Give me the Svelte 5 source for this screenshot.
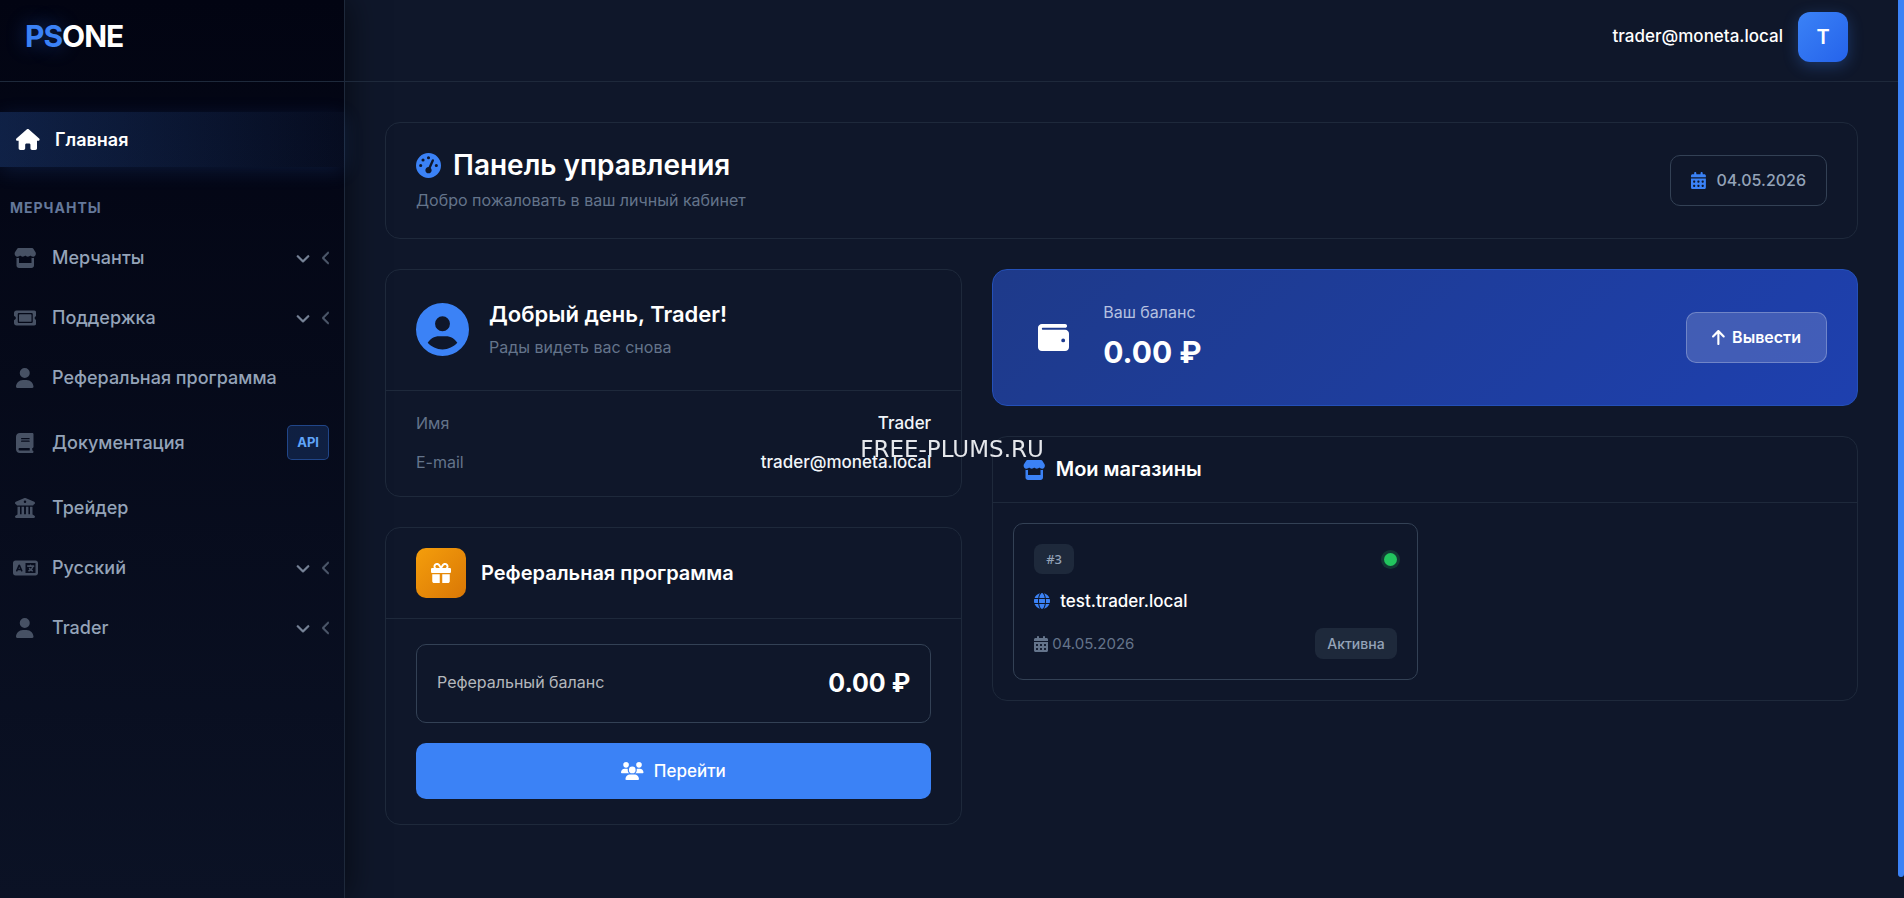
<script lang="ts">
  type IconDef = { w: number; d: string };

  type NavItem = {
    label: string;
    icon: string;
    submenu?: boolean;
    badge?: string;
  };

  const icons: Record<string, IconDef> = {
    home: {
      w: 576,
      d: 'M575.8 255.5c0 18-15 32.1-32 32.1h-32l.7 160.2c0 2.7-.2 5.4-.5 8.1V472c0 22.1-17.9 40-40 40H456c-1.1 0-2.2 0-3.3-.1c-1.4 .1-2.8 .1-4.2 .1H416 392c-22.1 0-40-17.9-40-40V448 384c0-17.7-14.3-32-32-32H256c-17.7 0-32 14.3-32 32v64 24c0 22.1-17.9 40-40 40H160 128.1c-1.5 0-3-.1-4.5-.2c-1.2 .1-2.4 .2-3.6 .2H104c-22.1 0-40-17.9-40-40V360c0-.9 0-1.9 .1-2.8V287.6H32c-18 0-32-14-32-32.1c0-9 3-17 10-24L266.4 8c7-7 15-8 22-8s15 2 21 7L564.8 231.5c8 7 12 15 11 24z',
    },
    store: {
      w: 576,
      d: 'M547.6 103.8L490.3 13.1C485.2 5 476.1 0 466.4 0H109.6C99.9 0 90.8 5 85.7 13.1L28.3 103.8c-29.6 46.8-3.4 111.9 51.9 119.4c4 .5 8.1 .8 12.1 .8c26.1 0 49.3-11.4 65.2-29c15.9 17.6 39.1 29 65.2 29c26.1 0 49.3-11.4 65.2-29c15.9 17.6 39.1 29 65.2 29c26.2 0 49.3-11.4 65.2-29c16 17.6 39.1 29 65.2 29c4.1 0 8.1-.3 12.1-.8c55.5-7.4 81.8-72.5 52.1-119.4zM499.7 254.9l-.1 0c-5.3 .7-10.7 1.1-16.2 1.1c-12.4 0-24.3-1.9-35.4-5.3V384H128V250.6c-11.2 3.5-23.2 5.4-35.6 5.4c-5.5 0-11-.4-16.3-1.1l-.1 0c-4.1-.6-8.1-1.3-12-2.3V384v64c0 35.3 28.7 64 64 64H448c35.3 0 64-28.7 64-64V384 252.6c-4 1-8 1.8-12.3 2.3z',
    },
    ticket: {
      w: 576,
      d: 'M64 64C28.7 64 0 92.7 0 128v64c0 8.8 7.4 15.7 15.7 18.6C34.5 217.1 48 235 48 256s-13.5 38.9-32.3 45.4C7.4 304.3 0 311.2 0 320v64c0 35.3 28.7 64 64 64H512c35.3 0 64-28.7 64-64V320c0-8.8-7.4-15.7-15.7-18.6C541.5 294.9 528 277 528 256s13.5-38.9 32.3-45.4c8.3-2.9 15.7-9.8 15.7-18.6V128c0-35.3-28.7-64-64-64H64zm64 112l0 160c0 8.8 7.2 16 16 16H432c8.8 0 16-7.2 16-16V176c0-8.8-7.2-16-16-16H144c-8.8 0-16 7.2-16 16zM96 160c0-17.7 14.3-32 32-32H448c17.7 0 32 14.3 32 32V352c0 17.7-14.3 32-32 32H128c-17.7 0-32-14.3-32-32V160z',
    },
    user: {
      w: 448,
      d: 'M224 256A128 128 0 1 0 224 0a128 128 0 1 0 0 256zm-45.7 48C79.8 304 0 383.8 0 482.3C0 498.7 13.3 512 29.7 512H418.3c16.4 0 29.7-13.3 29.7-29.7C448 383.8 368.2 304 269.7 304H178.3z',
    },
    book: {
      w: 448,
      d: 'M96 0C43 0 0 43 0 96V416c0 53 43 96 96 96H384h32c17.7 0 32-14.3 32-32s-14.3-32-32-32V384c17.7 0 32-14.3 32-32V32c0-17.7-14.3-32-32-32H384 96zm0 384H352v64H96c-17.7 0-32-14.3-32-32s14.3-32 32-32zm32-240c0-8.8 7.2-16 16-16H336c8.8 0 16 7.2 16 16s-7.2 16-16 16H144c-8.8 0-16-7.2-16-16zm16 48H336c8.8 0 16 7.2 16 16s-7.2 16-16 16H144c-8.8 0-16-7.2-16-16s7.2-16 16-16z',
    },
    bank: {
      w: 512,
      d: 'M243.4 2.6l-224 96c-14 6-21.8 21-18.7 35.8S16.8 160 32 160v8c0 13.3 10.7 24 24 24H456c13.3 0 24-10.7 24-24v-8c15.2 0 28.3-10.7 31.3-25.6s-4.8-29.9-18.7-35.8l-224-96c-8-3.4-17.2-3.4-25.2 0zM128 224H64V420.3c-.6 .3-1.2 .7-1.8 1.1l-48 32c-11.7 7.8-17 22.4-12.9 35.9S17.9 512 32 512H480c14.1 0 26.5-9.2 30.6-22.7s-1.1-28.1-12.9-35.9l-48-32c-.6-.4-1.2-.7-1.8-1.1V224H384V416H344V224H280V416H232V224H168V416H128V224zM256 64a32 32 0 1 1 0 64 32 32 0 1 1 0-64z',
    },
    language: {
      w: 640,
      d: 'M0 128C0 92.7 28.7 64 64 64H256h48 16H576c35.3 0 64 28.7 64 64V384c0 35.3-28.7 64-64 64H320 304 256 64c-35.3 0-64-28.7-64-64V128zm320 0V384H576V128H320zM178.3 175.9c-3.2-7.2-10.4-11.9-18.3-11.9s-15.1 4.7-18.3 11.9l-64 144c-4.5 10.1 .1 21.9 10.2 26.4s21.9-.1 26.4-10.2l8.9-20.1h73.6l8.9 20.1c4.5 10.1 16.3 14.6 26.4 10.2s14.6-16.3 10.2-26.4l-64-144zM160 233.2L179 276H141l19-42.8zM448 164c11 0 20 9 20 20v4h44 16c11 0 20 9 20 20s-9 20-20 20h-2l-1.6 4.5c-8.9 24.4-22.4 46.6-39.6 65.4c.9 .6 1.8 1.1 2.7 1.6l18.9 11.3c9.5 5.7 12.5 18 6.9 27.4s-18 12.5-27.4 6.9l-18.9-11.3c-4.5-2.7-8.8-5.5-13.1-8.5c-10.6 7.5-21.9 14-34 19.4l-3.6 1.6c-10.1 4.5-21.9-.1-26.4-10.2s.1-21.9 10.2-26.4l3.6-1.6c6.4-2.9 12.6-6.1 18.5-9.8l-12.2-12.2c-7.8-7.8-7.8-20.5 0-28.3s20.5-7.8 28.3 0l14.6 14.6 .5 .5c12.4-13.1 22.5-28.3 29.8-45H448 376c-11 0-20-9-20-20s9-20 20-20h52v-4c0-11 9-20 20-20z',
    },
    down: {
      w: 512,
      d: 'M233.4 406.6c12.5 12.5 32.8 12.5 45.3 0l192-192c12.5-12.5 12.5-32.8 0-45.3s-32.8-12.5-45.3 0L256 338.7 86.6 169.4c-12.5-12.5-32.8-12.5-45.3 0s-12.5 32.8 0 45.3l192 192z',
    },
    left: {
      w: 256,
      d: 'M9.4 233.4c-12.5 12.5-12.5 32.8 0 45.3l192 192c12.5 12.5 32.8 12.5 45.3 0s12.5-32.8 0-45.3L77.3 256 246.6 86.6c12.5-12.5 12.5-32.8 0-45.3s-32.8-12.5-45.3 0l-192 192z',
    },
    calendar: {
      w: 448,
      d: 'M128 0c17.7 0 32 14.3 32 32V64H288V32c0-17.7 14.3-32 32-32s32 14.3 32 32V64h48c26.5 0 48 21.5 48 48v48H0V112C0 85.5 21.5 64 48 64H96V32c0-17.7 14.3-32 32-32zM0 192H448V464c0 26.5-21.5 48-48 48H48c-26.5 0-48-21.5-48-48V192zm64 80v32c0 8.8 7.2 16 16 16h32c8.8 0 16-7.2 16-16V272c0-8.8-7.2-16-16-16H80c-8.8 0-16 7.2-16 16zm128 0v32c0 8.8 7.2 16 16 16h32c8.8 0 16-7.2 16-16V272c0-8.8-7.2-16-16-16H208c-8.8 0-16 7.2-16 16zm144-16c-8.8 0-16 7.2-16 16v32c0 8.8 7.2 16 16 16h32c8.8 0 16-7.2 16-16V272c0-8.8-7.2-16-16-16H336zM64 400v32c0 8.8 7.2 16 16 16h32c8.8 0 16-7.2 16-16V400c0-8.8-7.2-16-16-16H80c-8.8 0-16 7.2-16 16zm144-16c-8.8 0-16 7.2-16 16v32c0 8.8 7.2 16 16 16h32c8.8 0 16-7.2 16-16V400c0-8.8-7.2-16-16-16H208zm112 16v32c0 8.8 7.2 16 16 16h32c8.8 0 16-7.2 16-16V400c0-8.8-7.2-16-16-16H336c-8.8 0-16 7.2-16 16z',
    },
    gauge: {
      w: 512,
      d: 'M0 256a256 256 0 1 1 512 0A256 256 0 1 1 0 256zM288 96a32 32 0 1 0 -64 0 32 32 0 1 0 64 0zM256 416c35.3 0 64-28.7 64-64c0-17.4-6.9-33.1-18.1-44.6L366 161.7c5.3-12.1-.2-26.3-12.3-31.6s-26.3 .2-31.6 12.3L257.9 288c-.6 0-1.3 0-1.9 0c-35.3 0-64 28.7-64 64s28.7 64 64 64zM176 144a32 32 0 1 0 -64 0 32 32 0 1 0 64 0zM96 288a32 32 0 1 0 0-64 32 32 0 1 0 0 64zm352-32a32 32 0 1 0 -64 0 32 32 0 1 0 64 0z',
    },
    userCircle: {
      w: 512,
      d: 'M399 384.2C376.9 345.8 335.4 320 288 320H224c-47.4 0-88.9 25.8-111 64.2c35.2 39.2 86.2 63.8 143 63.8s107.8-24.7 143-63.8zM0 256a256 256 0 1 1 512 0A256 256 0 1 1 0 256zm256 16a72 72 0 1 0 0-144 72 72 0 1 0 0 144z',
    },
    gift: {
      w: 512,
      d: 'M190.5 68.8L225.3 128H224 152c-22.1 0-40-17.9-40-40s17.9-40 40-40h2.2c14.9 0 28.8 7.9 36.3 20.8zM64 88c0 14.4 3.5 28 9.6 40H32c-17.7 0-32 14.3-32 32v64c0 17.7 14.3 32 32 32H480c17.7 0 32-14.3 32-32V160c0-17.7-14.3-32-32-32H438.4c6.1-12 9.6-25.6 9.6-40c0-48.6-39.4-88-88-88h-2.2c-31.9 0-61.5 16.9-77.7 44.4L256 85.5l-24.1-41C215.7 16.9 186.1 0 154.2 0H152C103.4 0 64 39.4 64 88zm336 0c0 22.1-17.9 40-40 40H288h-1.3l34.8-59.2C329.1 55.9 342.9 48 357.8 48H360c22.1 0 40 17.9 40 40zM32 288V464c0 26.5 21.5 48 48 48H224V288H32zM288 512H432c26.5 0 48-21.5 48-48V288H288V512z',
    },
    wallet: {
      w: 512,
      d: 'M64 32C28.7 32 0 60.7 0 96V416c0 35.3 28.7 64 64 64H448c35.3 0 64-28.7 64-64V192c0-35.3-28.7-64-64-64H80c-8.8 0-16-7.2-16-16s7.2-16 16-16H448c17.7 0 32-14.3 32-32s-14.3-32-32-32H64zM416 272a32 32 0 1 1 0 64 32 32 0 1 1 0-64z',
    },
    up: {
      w: 384,
      d: 'M214.6 41.4c-12.5-12.5-32.8-12.5-45.3 0l-160 160c-12.5 12.5-12.5 32.8 0 45.3s32.8 12.5 45.3 0L160 141.2V448c0 17.7 14.3 32 32 32s32-14.3 32-32V141.2L329.4 246.6c12.5 12.5 32.8 12.5 45.3 0s12.5-32.8 0-45.3l-160-160z',
    },
    globe: {
      w: 512,
      d: 'M352 256c0 22.2-1.2 43.6-3.3 64H163.3c-2.2-20.4-3.3-41.8-3.3-64s1.2-43.6 3.3-64H348.7c2.2 20.4 3.3 41.8 3.3 64zm28.8-64H503.9c5.3 20.5 8.1 41.9 8.1 64s-2.8 43.5-8.1 64H380.8c2.1-20.6 3.2-42 3.2-64s-1.1-43.4-3.2-64zm112.6-32H376.7c-10-63.9-29.8-117.4-55.3-151.6c78.3 20.7 142 77.5 171.9 151.6zm-149.1 0H167.7c6.1-36.4 15.5-68.6 27-94.7c10.5-23.6 22.2-40.7 33.5-51.5C239.4 3.2 248.7 0 256 0s16.6 3.2 27.8 13.8c11.3 10.8 23 27.9 33.5 51.5c11.6 26 20.9 58.2 27 94.7zm-209 0H18.6C48.6 85.9 112.2 29.1 190.6 8.4C165.1 42.6 145.3 96.1 135.3 160zM8.1 192H131.2c-2.1 20.6-3.2 42-3.2 64s1.1 43.4 3.2 64H8.1C2.8 299.5 0 278.1 0 256s2.8-43.5 8.1-64zM194.7 446.6c-11.6-26-20.9-58.2-27-94.6H344.3c-6.1 36.4-15.5 68.6-27 94.6c-10.5 23.6-22.2 40.7-33.5 51.5C272.6 508.8 263.3 512 256 512s-16.6-3.2-27.8-13.8c-11.3-10.8-23-27.9-33.5-51.5zM135.3 352c10 63.9 29.8 117.4 55.3 151.6C112.2 482.9 48.6 426.1 18.6 352H135.3zm358.1 0c-30 74.1-93.6 130.9-171.9 151.6c25.5-34.2 45.2-87.7 55.3-151.6H493.4z',
    },
    users: {
      w: 640,
      d: 'M144 0a80 80 0 1 1 0 160A80 80 0 1 1 144 0zM512 0a80 80 0 1 1 0 160A80 80 0 1 1 512 0zM0 298.7C0 239.8 47.8 192 106.7 192h42.7c15.9 0 31 3.5 44.6 9.7c-1.3 7.2-1.9 14.7-1.9 22.3c0 38.2 16.8 72.5 43.3 96c-.2 0-.4 0-.7 0H21.3C9.6 320 0 310.4 0 298.7zM405.3 320c-.2 0-.4 0-.7 0c26.6-23.5 43.3-57.8 43.3-96c0-7.6-.7-15-1.9-22.3c13.6-6.3 28.7-9.7 44.6-9.7h42.7C592.2 192 640 239.8 640 298.7c0 11.8-9.6 21.3-21.3 21.3H405.3zM224 224a96 96 0 1 1 192 0 96 96 0 1 1 -192 0zM128 485.3C128 411.7 187.7 352 261.3 352H378.7C452.3 352 512 411.7 512 485.3c0 14.7-11.9 26.7-26.7 26.7H154.7c-14.7 0-26.7-11.9-26.7-26.7z',
    },
  };

  const navItems: NavItem[] = [
    { label: 'Мерчанты', icon: 'store', submenu: true },
    { label: 'Поддержка', icon: 'ticket', submenu: true },
    { label: 'Реферальная программа', icon: 'user' },
    { label: 'Документация', icon: 'book', badge: 'API' },
    { label: 'Трейдер', icon: 'bank' },
    { label: 'Русский', icon: 'language', submenu: true },
    { label: 'Trader', icon: 'user', submenu: true },
  ];

  const user = { name: 'Trader', email: 'trader@moneta.local' };
  const today = '04.05.2026';

  const shops = [{ id: 3, domain: 'test.trader.local', date: '04.05.2026', status: 'Активна' }];

  let opened = $state<string | null>(null);

  function toggle(label: string) {
    opened = opened === label ? null : label;
  }
</script>

{#snippet icon(name: string, size: number)}
  <svg
    class="icon"
    viewBox="0 0 {icons[name].w} 512"
    width={(size * icons[name].w) / 512}
    height={size}
    aria-hidden="true"
  >
    <path d={icons[name].d} />
  </svg>
{/snippet}

<div class="layout">
  <aside class="sidebar">
    <a class="brand" href="#home"><span>PS</span>ONE</a>

    <nav class="nav">
      <a class="nav-item active" href="#home" aria-current="page">
        <span class="nav-icon">{@render icon('home', 21)}</span>
        <span class="nav-label">Главная</span>
      </a>

      <div class="nav-section">Мерчанты</div>

      {#each navItems as item (item.label)}
        {#if item.submenu}
          <button
            class="nav-item"
            type="button"
            aria-expanded={opened === item.label}
            onclick={() => toggle(item.label)}
          >
            <span class="nav-icon">{@render icon(item.icon, 20)}</span>
            <span class="nav-label">{item.label}</span>
            <span class="arrow">{@render icon('down', 14)}</span>
            <span class="arrow dim">{@render icon('left', 14)}</span>
          </button>
        {:else}
          <a class="nav-item" href="#{item.icon}">
            <span class="nav-icon">{@render icon(item.icon, 20)}</span>
            <span class="nav-label">{item.label}</span>
            {#if item.badge}
              <span class="nav-badge">{item.badge}</span>
            {/if}
          </a>
        {/if}
      {/each}
    </nav>
  </aside>

  <div class="page">
    <header class="topbar">
      <span class="topbar-email">{user.email}</span>
      <button class="avatar" type="button" aria-label="Профиль">{user.name[0]}</button>
    </header>

    <main class="content">
      <section class="card page-head">
        <div>
          <h1>{@render icon('gauge', 25)}Панель управления</h1>
          <p class="muted">Добро пожаловать в ваш личный кабинет</p>
        </div>
        <div class="date">{@render icon('calendar', 17)}<time>{today}</time></div>
      </section>

      <div class="columns">
        <div class="column">
          <section class="card">
            <div class="welcome">
              {@render icon('userCircle', 53)}
              <div>
                <h2>Добрый день, {user.name}!</h2>
                <p class="muted">Рады видеть вас снова</p>
              </div>
            </div>
            <dl class="details">
              <div>
                <dt>Имя</dt>
                <dd>{user.name}</dd>
              </div>
              <div>
                <dt>E-mail</dt>
                <dd>{user.email}</dd>
              </div>
            </dl>
          </section>

          <section class="card">
            <div class="card-head">
              <span class="gift">{@render icon('gift', 20)}</span>
              <h3>Реферальная программа</h3>
            </div>
            <div class="referral">
              <div class="referral-balance">
                <span>Реферальный баланс</span>
                <strong>0.00 ₽</strong>
              </div>
              <a class="go" href="#referral">{@render icon('users', 18)}Перейти</a>
            </div>
          </section>
        </div>

        <div class="column">
          <section class="balance">
            <span class="wallet">{@render icon('wallet', 31)}</span>
            <div class="balance-info">
              <p>Ваш баланс</p>
              <strong>0.00 ₽</strong>
            </div>
            <button class="withdraw" type="button">{@render icon('up', 17)}Вывести</button>
          </section>

          <section class="card">
            <div class="card-head shops-head">
              {@render icon('store', 20)}
              <h3>Мои магазины</h3>
            </div>
            <div class="shops">
              {#each shops as shop (shop.id)}
                <article class="shop">
                  <div class="row">
                    <span class="shop-id">#{shop.id}</span>
                    <span class="dot"></span>
                  </div>
                  <div class="domain">{@render icon('globe', 16)}{shop.domain}</div>
                  <div class="row">
                    <span class="shop-date">{@render icon('calendar', 16)}{shop.date}</span>
                    <span class="status">{shop.status}</span>
                  </div>
                </article>
              {/each}
            </div>
          </section>
        </div>
      </div>
    </main>
  </div>

  <div class="scroll-track"><div class="scroll-thumb"></div></div>
</div>

<div class="watermark">FREE-PLUMS.RU</div>

<style>
  :global(body) {
    background: #0f172a;
  }

  .layout {
    display: flex;
    min-height: 100vh;
    font-family: Inter, 'Liberation Sans', sans-serif;
    font-size: 17px;
    line-height: 25px;
    color: #fff;
    background: #0f172a;
  }

  .layout * {
    box-sizing: border-box;
  }

  h1, h2, h3, p, dl, dd {
    margin: 0;
  }

  a {
    color: inherit;
    text-decoration: none;
  }

  button {
    font: inherit;
    color: inherit;
    cursor: pointer;
  }

  .icon {
    display: block;
    flex-shrink: 0;
    fill: currentColor;
  }

  .muted {
    font-size: 16px;
    line-height: 24px;
    color: #64748b;
  }

  /* sidebar */
  .sidebar {
    flex: 0 0 345px;
    border-right: 1px solid #1e293b;
    background: linear-gradient(180deg, #020412 0%, #0b1225 100%);
    box-shadow: 4px 0 30px rgba(0, 0, 0, 0.5);
  }

  .brand {
    display: block;
    height: 82px;
    padding: 21px 25px;
    border-bottom: 1px solid #1e293b;
    font-size: 30px;
    line-height: 30px;
    font-weight: 700;
    letter-spacing: -1px;
  }

  .brand span {
    color: #3b82f6;
    text-shadow: 0 0 20px rgba(59, 130, 246, 0.4);
  }

  .nav {
    padding-top: 30px;
  }

  .nav-item {
    display: flex;
    align-items: center;
    gap: 12px;
    width: 100%;
    margin-bottom: 5px;
    padding: 15px 15px 15px 10px;
    border: 0;
    background: none;
    color: #94a3b8;
    font-size: 18px;
    font-weight: 500;
    text-align: left;
  }

  .nav-item:hover {
    color: #e2e8f0;
  }

  .nav-item.active {
    padding-left: 13px;
    color: #fff;
    font-weight: 600;
    background: linear-gradient(90deg, rgba(59, 130, 246, 0.22), rgba(59, 130, 246, 0.05));
    box-shadow: 0 4px 20px rgba(59, 130, 246, 0.15);
  }

  .nav-icon {
    display: flex;
    justify-content: center;
    width: 30px;
    color: #475164;
  }

  .active .nav-icon {
    color: #fff;
  }

  .nav-label {
    flex: 1;
  }

  .arrow {
    color: #7b889c;
    stroke: currentColor;
    stroke-width: 20;
  }

  .arrow.dim {
    color: #4d586b;
  }

  .nav-badge {
    padding: 4px 9px;
    border: 1px solid rgba(59, 130, 246, 0.4);
    border-radius: 5px;
    background: rgba(59, 130, 246, 0.18);
    color: #60a5fa;
    font-size: 13px;
    font-weight: 700;
  }

  .nav-section {
    padding: 23px 10px 10px;
    color: #64789a;
    font-size: 14px;
    font-weight: 700;
    letter-spacing: 1px;
    text-transform: uppercase;
  }

  /* top bar */
  .page {
    flex: 1;
    min-width: 0;
  }

  .topbar {
    display: flex;
    justify-content: flex-end;
    gap: 15px;
    height: 82px;
    padding: 12px 50px 0 40px;
    border-bottom: 1px solid #1e293b;
  }

  .topbar-email {
    padding-top: 12px;
    font-weight: 500;
  }

  .avatar {
    width: 50px;
    height: 50px;
    padding: 0;
    border: 0;
    border-radius: 12px;
    background: linear-gradient(135deg, #3b82f6, #2563eb);
    box-shadow: 0 4px 15px rgba(59, 130, 246, 0.3);
    font-size: 20px;
    font-weight: 600;
  }

  .content {
    padding: 40px;
  }

  .card {
    border: 1px solid #1e293b;
    border-radius: 15px;
  }

  .page-head {
    display: flex;
    align-items: center;
    justify-content: space-between;
    margin-bottom: 30px;
    padding: 25px 30px 26px;
  }

  h1 {
    display: flex;
    align-items: center;
    gap: 12px;
    margin-bottom: 6px;
    font-size: 28px;
    line-height: 34px;
    font-weight: 600;
  }

  h1 :global(.icon) {
    color: #3b82f6;
  }

  .date {
    display: flex;
    align-items: center;
    gap: 11px;
    padding: 12px 20px;
    border: 1px solid #334155;
    border-radius: 10px;
    color: #94a3b8;
    font-size: 16px;
    font-weight: 500;
  }

  .date :global(.icon) {
    color: #3b82f6;
  }

  .columns {
    display: grid;
    grid-template-columns: 2fr 3fr;
    gap: 30px;
    align-items: start;
  }

  .column {
    display: grid;
    gap: 30px;
    min-width: 0;
  }

  /* left column */
  .welcome {
    display: flex;
    align-items: center;
    gap: 20px;
    padding: 29px 30px 31px;
    border-bottom: 1px solid #1e293b;
  }

  .welcome :global(.icon) {
    color: #3b82f6;
  }

  h2 {
    margin-bottom: 6px;
    font-size: 22px;
    line-height: 30px;
    font-weight: 600;
  }

  .details {
    display: grid;
    gap: 14px;
    padding: 20px 30px 21px;
  }

  .details div {
    display: flex;
    justify-content: space-between;
  }

  .details dt {
    color: #64748b;
    font-size: 16px;
  }

  .details dd {
    color: #f1f5f9;
    font-weight: 500;
  }

  .card-head {
    display: flex;
    align-items: center;
    gap: 15px;
    padding: 20px 30px;
    border-bottom: 1px solid #1e293b;
  }

  h3 {
    font-size: 20px;
    font-weight: 600;
  }

  .gift {
    display: grid;
    place-items: center;
    width: 50px;
    height: 50px;
    border-radius: 10px;
    background: linear-gradient(135deg, #f59e0b, #d97706);
  }

  .referral {
    display: grid;
    gap: 20px;
    padding: 25px 30px;
  }

  .referral-balance {
    display: flex;
    align-items: flex-start;
    justify-content: space-between;
    padding: 20px;
    border: 1px solid #334155;
    border-radius: 10px;
    color: #b4b7bd;
    font-size: 16px;
    line-height: 34px;
  }

  .referral-balance strong {
    color: #fff;
    font-size: 25px;
    line-height: 37px;
    font-weight: 700;
  }

  .go {
    display: flex;
    align-items: center;
    justify-content: center;
    gap: 10px;
    height: 56px;
    border-radius: 10px;
    background: #3b82f6;
    font-weight: 500;
  }

  .go:hover {
    background: #2563eb;
  }

  /* right column */
  .balance {
    display: flex;
    align-items: center;
    gap: 20px;
    padding: 30px;
    border: 1px solid #2450b8;
    border-radius: 15px;
    background: linear-gradient(135deg, #1e3a8a, #1e40af);
  }

  .wallet {
    display: grid;
    place-items: center;
    width: 60px;
    height: 60px;
  }

  .balance-info {
    flex: 1;
  }

  .balance-info p {
    margin-bottom: 9px;
    color: #b6c1e0;
    font-size: 16px;
  }

  .balance-info strong {
    display: block;
    margin-bottom: 5px;
    font-size: 30px;
    line-height: 36px;
    font-weight: 700;
  }

  .withdraw {
    display: flex;
    align-items: center;
    gap: 7px;
    padding: 12px 25px;
    border: 1px solid rgba(255, 255, 255, 0.25);
    border-radius: 10px;
    background: rgba(255, 255, 255, 0.16);
    font-size: 16px;
    font-weight: 600;
  }

  .shops-head {
    gap: 10px;
  }

  .shops-head :global(.icon) {
    color: #3b82f6;
  }

  .shops {
    display: grid;
    grid-template-columns: 1fr 1fr;
    gap: 15px;
    padding: 20px;
  }

  .shop {
    display: grid;
    gap: 14px;
    padding: 20px;
    border: 1px solid #334155;
    border-radius: 10px;
  }

  .row {
    display: flex;
    align-items: center;
    justify-content: space-between;
  }

  .shop-id,
  .status {
    padding: 3px 12px;
    border-radius: 8px;
    background: #1e293b;
    color: #94a3b8;
    font-size: 14px;
    font-weight: 500;
  }

  .shop-id {
    font-family: 'Noto Sans', sans-serif;
    font-size: 13px;
    line-height: 24px;
  }

  .dot {
    width: 13px;
    height: 13px;
    border-radius: 50%;
    background: #22c55e;
    box-shadow: 0 0 0 3px rgba(34, 197, 94, 0.2);
  }

  .domain {
    display: flex;
    align-items: center;
    gap: 10px;
    line-height: 26px;
    font-weight: 500;
  }

  .domain :global(.icon) {
    color: #3b82f6;
  }

  .shop-date {
    display: flex;
    align-items: center;
    gap: 4px;
    color: #64748b;
    font-size: 15px;
  }

  .scroll-track {
    flex: 0 0 6px;
    height: 100vh;
  }

  .scroll-thumb {
    height: calc(100% - 21px);
    border-radius: 0 0 3px 3px;
    background: #3b82f6;
  }

  .watermark {
    position: fixed;
    inset: 0;
    display: grid;
    place-items: center;
    color: #e5e7eb;
    font-family: 'DejaVu Sans', sans-serif;
    font-size: 23px;
    pointer-events: none;
  }
</style>
